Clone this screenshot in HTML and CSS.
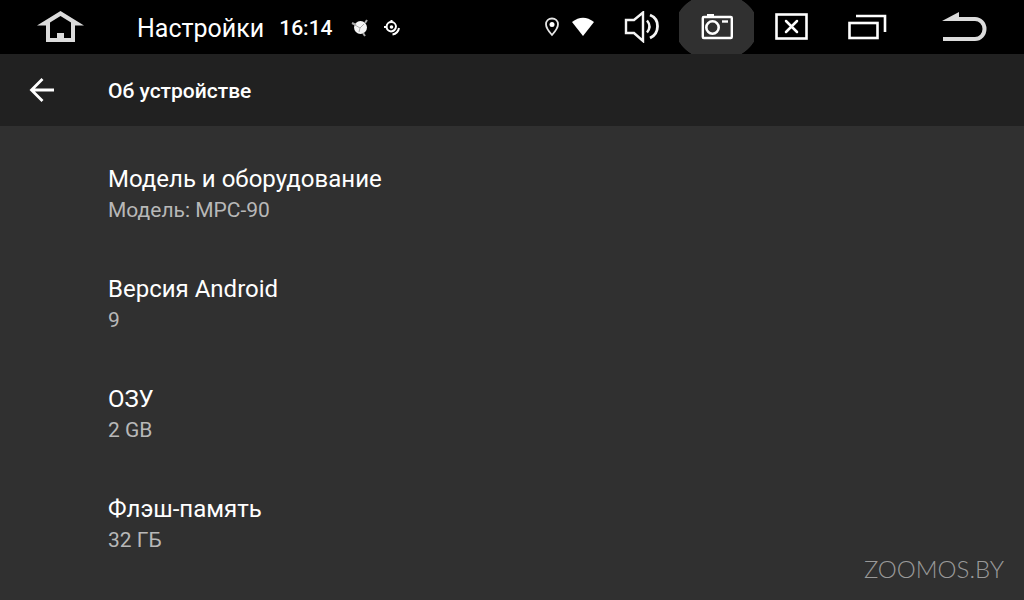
FILE: index.html
```html
<!DOCTYPE html>
<html lang="ru">
<head>
  <meta charset="UTF-8">
  <meta name="viewport" content="width=device-width, initial-scale=1.0">
  <title>Об устройстве</title>
  <link rel="stylesheet" href="styles.css">
</head>
<body>
  <header class="statusbar">
    <button class="key key-wide" aria-label="Домой">
      <svg width="48" height="32" viewBox="0 0 48 32">
        <path fill="#dcdcdc" fill-rule="evenodd" d="M24.500 0 L48 14.500 H39 V31 H10 V14.500 H1 Z M24.500 5 L14 11.500 V27 H21 V22 H28 V27 H35 V11.500 Z"/>
      </svg>
    </button>
    <span class="app-name">Настройки</span>
    <time class="clock">16:14</time>
    <div class="notices">
      <svg width="18" height="18" viewBox="0 0 18 18">
        <circle cx="9.500" cy="8.500" r="6.500" fill="#f4f4f4"/>
        <path d="M4 6 L9 9 L13 5 M9 9 L8 13" fill="none" stroke="#aaa" stroke-width="1"/>
        <path d="M1 4 L5 6 M16 1 L14 4 M14 17 L12 14" stroke="#aaa" stroke-width="2"/>
      </svg>
      <svg width="18" height="18" viewBox="0 0 18 18" fill="none" stroke="#fff" stroke-width="2">
        <path d="M7 12.500 A4.700 4.700 0 1 1 12 8"/>
        <path d="M7.500 1 V4 M0 8 H3"/>
        <circle cx="7.500" cy="8" r="1.800" fill="#fff" stroke="none"/>
        <path d="M7 12.500 Q11 12 12 8"/>
        <path d="M8.500 15.500 Q14 14.500 15 9"/>
      </svg>
    </div>
    <div class="signals">
      <svg width="16" height="20" viewBox="0 0 16 20">
        <path d="M8 1.500 C4.500 1.500 2 4 2 7.300 C2 11.500 8 18 8 18 C8 18 14 11.500 14 7.300 C14 4 11.500 1.500 8 1.500 Z" fill="none" stroke="#e6e6e6" stroke-width="1.800"/>
        <circle cx="8" cy="7.500" r="2.500" fill="#fff"/>
      </svg>
      <svg width="22" height="20" viewBox="0 0 22 20">
        <path d="M0 5 Q11 -3.500 22 5 L11 19 Z" fill="#fff"/>
      </svg>
    </div>
    <button class="key" aria-label="Громкость">
      <svg width="36" height="32" viewBox="0 0 36 32" fill="none" stroke="#f4f4f4" stroke-width="2.400">
        <path d="M2 9 H10 L19 1.500 V30 L10 22 H2 Z"/>
        <path d="M23 9.500 Q28 15.500 23 21.500"/>
        <path d="M26 4 C36 8 36 22 26 27" stroke-width="2.800"/>
      </svg>
    </button>
    <button class="key key-active" aria-label="Снимок экрана">
      <svg width="32" height="26" viewBox="0 0 32 26" fill="none" stroke="#fff" stroke-width="2.400">
        <rect x="1.800" y="3" width="29" height="21" rx="1"/>
        <path d="M6 1.500 H13" stroke-width="3"/>
        <circle cx="11.500" cy="13.500" r="6.200" stroke-width="2.600"/>
        <path d="M21 7.500 H27"/>
      </svg>
    </button>
    <button class="key" aria-label="Закрыть">
      <svg width="34" height="28" viewBox="0 0 34 28" fill="none" stroke="#fff">
        <rect x="1.500" y="1.500" width="30" height="24" stroke-width="2.600"/>
        <path d="M11 8 L22 19 M22 8 L11 19" stroke-width="2.500" stroke-linecap="round"/>
      </svg>
    </button>
    <button class="key" aria-label="Недавние приложения">
      <svg width="40" height="28" viewBox="0 0 40 28" fill="none" stroke="#fff">
        <rect x="2.500" y="10" width="28" height="15" stroke-width="2.600"/>
        <path d="M9 3 H38 V19" stroke-width="2.600"/>
      </svg>
    </button>
    <button class="key key-wide" aria-label="Назад">
      <svg width="46" height="32" viewBox="0 0 46 32">
        <path d="M2 28 H34 A9.500 10 0 0 0 34 8 H14" fill="none" stroke="#dcdcdc" stroke-width="4"/>
        <path d="M1 10 L18 1 V10 Z" fill="#dcdcdc"/>
      </svg>
    </button>
  </header>

  <nav class="toolbar">
    <button class="up" aria-label="Вверх">
      <svg width="26" height="26" viewBox="0 0 26 26" fill="none" stroke="#fff" stroke-width="2.800">
        <path d="M25 13 H3 M13.500 2 L2.500 13 L13.500 24"/>
      </svg>
    </button>
    <h1 class="heading">Об устройстве</h1>
  </nav>

  <main>
    <ul class="prefs">
      <li class="pref">
        <h2 class="pref-title">Модель и оборудование</h2>
        <p class="pref-summary">Модель: MPC-90</p>
      </li>
      <li class="pref">
        <h2 class="pref-title">Версия Android</h2>
        <p class="pref-summary">9</p>
      </li>
      <li class="pref">
        <h2 class="pref-title">ОЗУ</h2>
        <p class="pref-summary">2 GB</p>
      </li>
      <li class="pref">
        <h2 class="pref-title">Флэш-память</h2>
        <p class="pref-summary">32 ГБ</p>
      </li>
    </ul>
  </main>

  <div class="watermark">ZOOMOS.BY</div>
</body>
</html>
```
FILE: styles.css
```css
* {
  box-sizing: border-box;
}

body {
  margin: 0;
  min-height: 100vh;
  background: #303030;
  color: #fff;
  font-family: Roboto, "Noto Sans", sans-serif;
}

button {
  display: flex;
  align-items: center;
  justify-content: center;
  padding: 0;
  border: 0;
  background: none;
  color: inherit;
}

h1, h2, p, ul {
  margin: 0;
  padding: 0;
}

svg {
  display: block;
}

.statusbar {
  display: flex;
  align-items: center;
  height: 54px;
  background: #000;
}

.key {
  width: 75px;
  height: 54px;
}

.key-wide {
  width: 120px;
}

/* round highlight, cut off by the edges of the key */
.key-active {
  background: radial-gradient(42px 34px, #303030 98%, transparent 100%);
}

.app-name {
  margin-left: 17px;
  padding-top: 3px;
  font-size: 25px;
  line-height: 32px;
}

.clock {
  margin-left: 15px;
  padding-top: 2px;
  font-size: 21px;
  font-weight: 500;
  line-height: 32px;
}

.notices {
  display: flex;
  gap: 15px;
  margin-left: 18px;
  padding-top: 2px;
}

.signals {
  display: flex;
  gap: 12px;
  margin-left: auto;
  margin-right: 10px;
}

.toolbar {
  display: flex;
  align-items: center;
  height: 72px;
  background: #212121;
}

.up {
  width: 84px;
  height: 72px;
}

.heading {
  margin-left: 24px;
  padding-top: 2px;
  font-size: 21px;
  font-weight: 500;
  line-height: 32px;
}

.prefs {
  padding-top: 13px;
  list-style: none;
}

.pref {
  height: 110px;
  padding: 24px 24px 24px 108px;
}

.pref-title {
  font-size: 24px;
  font-weight: 400;
  line-height: 32px;
}

.pref-summary {
  color: #b8b8b8;
  font-size: 21px;
  line-height: 30px;
}

/* sits over the list in the bottom corner */
.watermark {
  position: absolute;
  right: 20px;
  bottom: 15px;
  color: #999;
  font-family: Lato, sans-serif;
  font-size: 24px;
  font-weight: 300;
  line-height: 32px;
}
```
